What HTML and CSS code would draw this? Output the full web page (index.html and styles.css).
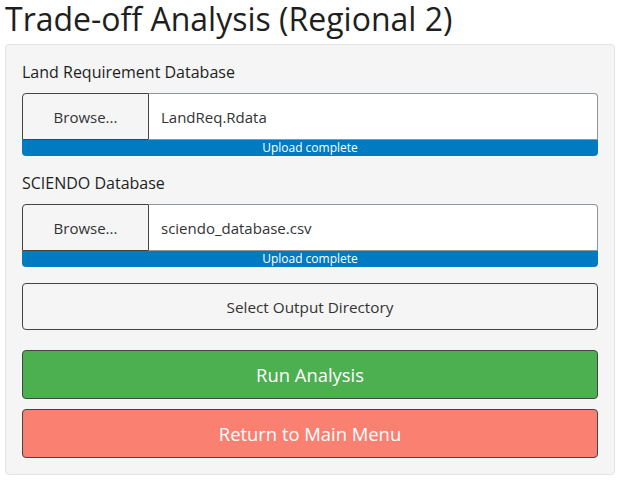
FILE: index.html
```html
<!DOCTYPE html>
<html>
<head>
<meta charset="utf-8">
<link rel="stylesheet" href="styles.css">
</head>
<body>
<div class="page">
  <h2 class="title">Trade-off Analysis (Regional 2)</h2>
  <div class="well">
    <div class="field">
      <label class="label">Land Requirement Database</label>
      <div class="file">
        <span class="browse">Browse...</span>
        <span class="fname">LandReq.Rdata</span>
      </div>
      <div class="progress">Upload complete</div>
    </div>
    <div class="field">
      <label class="label">SCIENDO Database</label>
      <div class="file">
        <span class="browse">Browse...</span>
        <span class="fname">sciendo_database.csv</span>
      </div>
      <div class="progress">Upload complete</div>
    </div>
    <div class="btn btn-default">Select Output Directory</div>
    <div class="btn btn-run">Run Analysis</div>
    <div class="btn btn-return">Return to Main Menu</div>
  </div>
</div>
</body>
</html>
```
FILE: styles.css
```css
* { box-sizing: border-box; }
body {
  margin: 0;
  font-family: "Open Sans", "DejaVu Sans", sans-serif;
  color: #1d1f21;
  background: #fff;
}
.page {
  padding: 0 10px 0 5px;
}
.title {
  margin: 0 0 6px 0;
  font-size: 32px;
  font-weight: 400;
  line-height: 38px;
  color: #1d1f21;
}
.well {
  background: #f5f5f5;
  border: 1px solid #e3e3e3;
  border-radius: 4px;
  padding: 16px 16px 16px 16px;
}
.field {
  margin-bottom: 16px;
}
.label {
  display: block;
  font-size: 16px;
  line-height: 22px;
  margin-bottom: 10px;
}
.file {
  display: flex;
  height: 47px;
}
.browse {
  flex: 0 0 127px;
  display: flex;
  align-items: center;
  justify-content: center;
  border: 1px solid #444;
  border-radius: 4px 0 0 0;
  background: #f5f5f5;
  font-size: 15px;
  color: #333;
}
.fname {
  flex: 1;
  display: flex;
  align-items: center;
  padding-left: 12px;
  background: #fff;
  border: 1px solid #8f959c;
  border-left: none;
  border-radius: 0 4px 0 0;
  font-size: 15px;
  color: #333;
}
.progress {
  margin-top: 0;
  height: 16px;
  background: #007bc2;
  color: #fff;
  font-size: 12px;
  line-height: 16px;
  text-align: center;
  border-radius: 0 0 4px 4px;
}
.btn {
  display: flex;
  align-items: center;
  justify-content: center;
  border: 1px solid #444;
  border-radius: 4px;
  font-size: 15.3px;
  color: #333;
}
.btn-default {
  height: 47px;
  background: #f5f5f5;
  margin-bottom: 20px;
}
.btn-run {
  height: 49px;
  background: #4caf50;
  color: #fff;
  font-size: 18.4px;
  margin-bottom: 10px;
}
.btn-return {
  height: 49px;
  background: #fa8072;
  color: #fff;
  font-size: 18.4px;
}
```
